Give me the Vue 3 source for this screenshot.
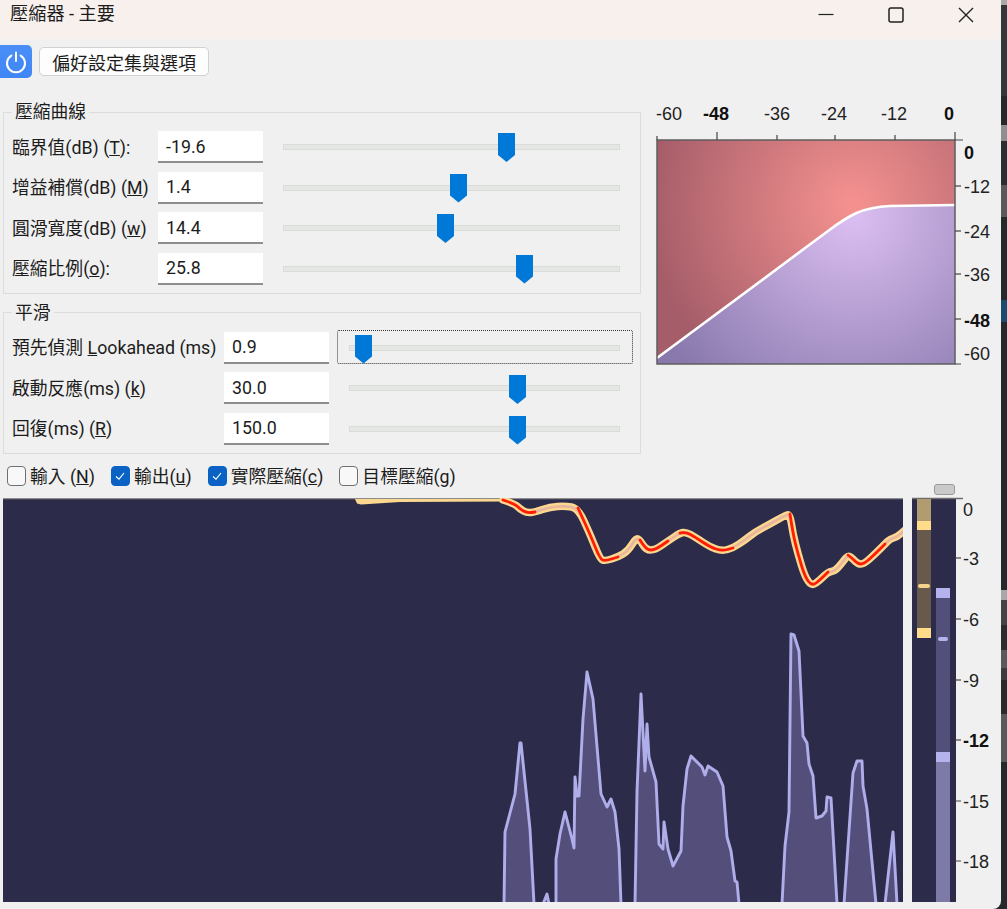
<script setup>
const curveRows = [
  { label: ['臨界值(dB) (', 'T', '):'], value: '-19.6', thumb: 215 },
  { label: ['增益補償(dB) (', 'M', ')'], value: '1.4', thumb: 167 },
  { label: ['圓滑寬度(dB) (', 'w', ')'], value: '14.4', thumb: 154 },
  { label: ['壓縮比例(', 'o', '):'], value: '25.8', thumb: 233 }
]
const smoothRows = [
  { label: ['預先偵測 ', 'L', 'ookahead (ms)'], value: '0.9', thumb: 6, focused: true },
  { label: ['啟動反應(ms) (', 'k', ')'], value: '30.0', thumb: 160 },
  { label: ['回復(ms) (', 'R', ')'], value: '150.0', thumb: 160 }
]
const checks = [
  { label: ['輸入 (', 'N', ')'], on: false },
  { label: ['輸出(', 'u', ')'], on: true },
  { label: ['實際壓縮(', 'c', ')'], on: true },
  { label: ['目標壓縮(', 'g', ')'], on: false }
]
const topScale = [
  { t: '-60', x: 669 }, { t: '-48', x: 716, b: true }, { t: '-36', x: 777 },
  { t: '-24', x: 834 }, { t: '-12', x: 894 }, { t: '0', x: 949, b: true }
]
const topTicks = [[657, 136], [717, 132], [777, 135], [835, 135], [895, 135], [955, 132]]
const rightScale = [
  { t: '0', y: 152, b: true }, { t: '-12', y: 186 }, { t: '-24', y: 231 },
  { t: '-36', y: 274 }, { t: '-48', y: 320, b: true }, { t: '-60', y: 353 }
]
const rightTicks = [186, 231, 274, 319]
const meterScale = [
  { t: '0', y: 510, tick: 499 }, { t: '-3', y: 559, tick: 559 }, { t: '-6', y: 620, tick: 620 },
  { t: '-9', y: 681, tick: 681 }, { t: '-12', y: 741, tick: 741, b: true },
  { t: '-15', y: 802, tick: 802 }, { t: '-18', y: 862, tick: 862 }
]
const blobs = [
  '504,905 505,833 515,795 520,744 521,744 530,830 534,905',
  '543,905 547,895 549,905',
  '556,905 556,860 560,835 565,813 572,840 574,849 575,778 577,797 579,797 583,720 587,673 593,700 601,795 607,808 611,800 615,813 619,850 621,905',
  '635,905 637,793 641,695 645,772 647,725 649,758 656,783 659,845 663,850 664,823 668,850 673,867 681,852 683,807 687,770 691,757 697,763 702,768 705,776 708,767 717,773 723,787 727,838 731,852 735,882 737,883 739,905',
  '782,905 785,847 789,813 791,635 794,636 799,652 803,737 807,744 809,765 813,777 816,819 822,817 826,812 827,798 831,799 837,905',
  '844,905 853,774 857,762 862,762 863,787 867,810 876,905',
  '885,905 893,833 897,905'
]
const gainPts = [
  [503, 501], [515, 505], [520, 510], [527, 514], [535, 513], [550, 508], [565, 507], [578, 509],
  [590, 535], [600, 560], [605, 562], [618, 558], [628, 552], [636, 539], [640, 541], [646, 551],
  [655, 551], [668, 542], [680, 534], [686, 533], [695, 538], [710, 548], [722, 552], [733, 549],
  [745, 541], [755, 533], [770, 525], [784, 517], [790, 515], [793, 535], [798, 555], [805, 578],
  [812, 587], [820, 581], [828, 573], [835, 572], [842, 564], [848, 556], [853, 560], [858, 565],
  [864, 565], [875, 555], [885, 545], [890, 540], [897, 538], [905, 531]
]
function smooth(pts) {
  let d = `M${pts[0][0]} ${pts[0][1]}`
  for (let i = 1; i < pts.length - 1; i++) {
    const mx = (pts[i][0] + pts[i + 1][0]) / 2
    const my = (pts[i][1] + pts[i + 1][1]) / 2
    d += ` Q${pts[i][0]} ${pts[i][1]} ${mx} ${my}`
  }
  const last = pts[pts.length - 1]
  return d + ` L${last[0]} ${last[1]}`
}
const gainPath = smooth(gainPts)
const gainRed = [[0, 4], [7, 11], [14, 17], [18, 23], [28, 34], [37, 42]].map(([a, b]) => smooth(gainPts.slice(a, b + 1)))
const stripes = [
  [5, '#a9a9a9'], [91, '#33373a'], [29, '#26292b'], [16, '#8f8f8f'], [44, '#2a2e30'], [32, '#595959'],
  [83, '#26292b'], [22, '#1e4a6b'], [268, '#26292b'], [10, '#a8a8a8'], [25, '#444444'], [25, '#2c2c2c'],
  [18, '#5a5a5a'], [12, '#3c3c3c'], [34, '#2a2a2a'], [48, '#5a5a5a'], [147, '#26292b']
]
</script>

<template>
  <div class="page">
    <div class="window">
      <header class="titlebar">
        <span class="title">壓縮器 - 主要</span>
        <div class="controls">
          <span class="ctl"><svg width="16" height="16" viewBox="0 0 16 16"><path d="M0.5 7.5H15.5" stroke="#222" stroke-width="1.2" /></svg></span>
          <span class="ctl"><svg width="16" height="16" viewBox="0 0 16 16"><rect x="1" y="1" width="14" height="14" rx="2" fill="none" stroke="#222" stroke-width="1.5" /></svg></span>
          <span class="ctl"><svg width="16" height="16" viewBox="0 0 16 16"><path d="M1 1L15 15M15 1L1 15" stroke="#222" stroke-width="1.4" /></svg></span>
        </div>
      </header>

      <div class="toolbar">
        <button class="power" type="button" aria-label="power">
          <svg width="24" height="24" viewBox="0 0 24 24">
            <path d="M7.4 5.6A9 9 0 1 0 16.6 5.6" fill="none" stroke="#fff" stroke-width="2" stroke-linecap="round" />
            <path d="M12 2.5V11" stroke="#fff" stroke-width="2" stroke-linecap="round" />
          </svg>
        </button>
        <button class="preset" type="button">偏好設定集與選項</button>
      </div>

      <div class="top">
        <div class="panel">
          <fieldset class="group">
            <legend>壓縮曲線</legend>
            <div v-for="r in curveRows" :key="r.value" class="row">
              <label class="lbl lbl-a">{{ r.label[0] }}<u>{{ r.label[1] }}</u>{{ r.label[2] }}</label>
              <input class="num" :value="r.value" readonly />
              <div class="slider slider-a">
                <span class="track"></span>
                <span class="thumb" :style="{ left: r.thumb + 'px' }"></span>
              </div>
            </div>
          </fieldset>
          <fieldset class="group second">
            <legend>平滑</legend>
            <div v-for="r in smoothRows" :key="r.value" class="row">
              <label class="lbl lbl-b">{{ r.label[0] }}<u>{{ r.label[1] }}</u>{{ r.label[2] }}</label>
              <input class="num" :value="r.value" readonly />
              <div class="slider slider-b" :class="{ focused: r.focused }">
                <span class="track"></span>
                <span class="thumb" :style="{ left: r.thumb + 'px' }"></span>
              </div>
            </div>
          </fieldset>
        </div>

        <svg class="curve" width="351" height="270" viewBox="650 100 351 270">
          <defs>
            <radialGradient id="up" gradientUnits="userSpaceOnUse" cx="853" cy="205" r="205">
              <stop offset="0" stop-color="#f69290" />
              <stop offset="1" stop-color="#a55d69" />
            </radialGradient>
            <radialGradient id="low" gradientUnits="userSpaceOnUse" cx="853" cy="215" r="225">
              <stop offset="0" stop-color="#dcbff2" />
              <stop offset="1" stop-color="#8878ac" />
            </radialGradient>
          </defs>
          <rect x="657" y="140" width="298" height="224" fill="url(#up)" />
          <path d="M657 358L828 231C848 216 862 207 890 206L955 205V364H657Z" fill="url(#low)" />
          <path d="M657 358L828 231C848 216 862 207 890 206L955 205" fill="none" stroke="#fff" stroke-width="2.6" />
          <rect x="657" y="140" width="298" height="224" fill="none" stroke="#5e5e5e" stroke-width="1.5" />
          <path v-for="t in topTicks" :key="t[0]" :d="`M${t[0]} 140V${t[1]}`" stroke="#444" stroke-width="1.2" />
          <path d="M955 140H963M955 364H961" stroke="#444" stroke-width="1.2" />
          <path v-for="y in rightTicks" :key="y" :d="`M955 ${y}H961`" stroke="#444" stroke-width="1.2" />
          <text v-for="s in topScale" :key="s.t" class="scale" :class="{ bold: s.b }" :x="s.x" y="120" text-anchor="middle">{{ s.t }}</text>
          <text v-for="s in rightScale" :key="s.t" class="scale" :class="{ bold: s.b }" x="964" :y="s.y + 6.5">{{ s.t }}</text>
        </svg>
      </div>

      <div class="checks">
        <label v-for="c in checks" :key="c.label[0]" class="check">
          <span class="box" :class="{ on: c.on }">
            <svg v-if="c.on" width="12" height="12" viewBox="0 0 12 12"><path d="M2 6.5L5 9.2L10 3" fill="none" stroke="#fff" stroke-width="1.1" /></svg>
          </span>
          <span class="check-text">{{ c.label[0] }}<u>{{ c.label[1] }}</u>{{ c.label[2] }}</span>
        </label>
      </div>

      <div class="scope">
        <svg class="wave" width="900" height="404" viewBox="3 499 900 404">
          <defs>
            <filter id="soft" x="-5%" y="-5%" width="110%" height="110%">
              <feGaussianBlur stdDeviation="0.45" />
            </filter>
          </defs>
          <rect x="3" y="499" width="900" height="404" fill="#2c2c4a" />
          <path d="M3 499.5H903" stroke="#8c8c8c" stroke-width="1.5" />
          <g filter="url(#soft)">
            <polygon v-for="(b, i) in blobs" :key="i" :points="b" fill="#52507a" stroke="#b0aeea" stroke-width="2.9" stroke-linejoin="round" />
            <polygon points="355,500 503,500 505,502.5 400,503 361,505.5 357,504.5" fill="#fbd78f" />
            <path :d="gainPath" fill="none" stroke="#fbd78f" stroke-width="7.5" stroke-linejoin="round" stroke-linecap="round" />
            <path :d="gainPath" fill="none" stroke="#e8b69e" stroke-width="2.6" stroke-linejoin="round" />
            <path v-for="(p, i) in gainRed" :key="'r' + i" :d="p" fill="none" stroke="#ff1e06" stroke-width="2.8" stroke-linejoin="round" stroke-linecap="round" />
          </g>
        </svg>
        <div class="meter">
          <span class="handle"></span>
          <svg width="89" height="404" viewBox="912 499 89 404">
            <rect x="912" y="499" width="44" height="404" fill="#2c2c4a" />
            <path d="M912 499.5H963" stroke="#6e6e6e" stroke-width="1.5" />
            <rect x="917" y="500" width="14" height="22" fill="#b09c70" />
            <rect x="917" y="522" width="14" height="9" fill="#ffdc8a" />
            <rect x="917" y="531" width="14" height="98" fill="#675a4c" />
            <rect x="918" y="585" width="12" height="4" rx="2" fill="#f4d48a" />
            <rect x="917" y="629" width="14" height="10" fill="#ffdc8a" />
            <rect x="936" y="589" width="14" height="10" fill="#b5b3ee" />
            <rect x="936" y="599" width="14" height="154" fill="#52507a" />
            <rect x="938" y="638" width="10" height="4" rx="2" fill="#b5b3ee" />
            <rect x="936" y="753" width="14" height="10" fill="#b5b3ee" />
            <rect x="936" y="763" width="14" height="140" fill="#7d7aa8" />
            <path v-for="s in meterScale.slice(1)" :key="s.t" :d="`M955 ${s.tick}H961`" stroke="#444" stroke-width="1.2" />
            <text v-for="s in meterScale" :key="s.t" class="scale" :class="{ bold: s.b }" x="963" :y="s.y + 6.5">{{ s.t }}</text>
          </svg>
        </div>
      </div>
    </div>
    <div class="strip">
      <span v-for="(s, i) in stripes" :key="i" :style="{ height: s[0] + 'px', background: s[1] }"></span>
    </div>
  </div>
</template>

<style scoped>
.page {
  width: 1007px;
  height: 909px;
  display: flex;
  overflow: hidden;
  background: #26292b;
  font-family: Roboto, "Noto Sans CJK TC", sans-serif;
  font-size: 17.8px;
  color: #1c1c1c;
}
.window {
  width: 1001px;
  height: 909px;
  flex: none;
  display: flex;
  flex-direction: column;
  background: #f0f0f0;
  border-bottom-right-radius: 8px;
  overflow: hidden;
}
.strip {
  width: 6px;
  display: flex;
  flex-direction: column;
}
.strip span {
  display: block;
  flex: none;
}
.titlebar {
  height: 39px;
  flex: none;
  display: flex;
  justify-content: space-between;
  background: #f7f0ec;
}
.title {
  margin-left: 10px;
  line-height: 28px;
  font-size: 18.2px;
}
.controls {
  display: flex;
}
.ctl {
  width: 70px;
  height: 29px;
  display: flex;
  align-items: center;
  justify-content: center;
}
.toolbar {
  display: flex;
  align-items: center;
  gap: 7px;
  margin-top: 6px;
  height: 33px;
}
button {
  font: inherit;
  color: inherit;
  padding: 0;
}
.power {
  width: 32px;
  height: 33px;
  display: flex;
  align-items: center;
  justify-content: center;
  border: none;
  border-radius: 0 5px 5px 0;
  background: linear-gradient(#4a8ff8, #3f86f5);
}
.preset {
  width: 170px;
  height: 29px;
  background: #fdfdfd;
  border: 1px solid #d2d2d2;
  border-radius: 5px;
  font-size: 18px;
}
.top {
  display: flex;
  gap: 9px;
  margin-top: 22px;
  padding-left: 3px;
}
.panel {
  width: 638px;
  flex: none;
  display: flex;
  flex-direction: column;
  gap: 7px;
}
.group {
  margin: 0;
  padding: 7px 0 8px 8px;
  min-width: 0;
  border: 1px solid #dcdcdc;
  display: flex;
  flex-direction: column;
  gap: 8.5px;
}
.group legend {
  margin-left: 0;
  padding: 0 3px;
  line-height: 24px;
}
.row {
  display: flex;
  align-items: center;
  height: 32px;
}
.lbl {
  flex: none;
  white-space: nowrap;
  padding-bottom: 3px;
}
.lbl-a {
  width: 146px;
}
.lbl-b {
  width: 212px;
}
.num {
  width: 105px;
  height: 32px;
  flex: none;
  box-sizing: border-box;
  padding: 0 8px;
  border: none;
  border-bottom: 2px solid #8e8e8e;
  background: #fff;
  font: inherit;
  color: inherit;
  outline: none;
}
.slider {
  position: relative;
  height: 32px;
  flex: none;
  display: flex;
  align-items: center;
}
.slider-a {
  margin-left: 20px;
  width: 337px;
}
.slider-b {
  margin-left: 20px;
  width: 271px;
}
.focused::after {
  content: "";
  position: absolute;
  left: -12px;
  right: -13px;
  top: -2px;
  bottom: 0;
  border: 1px dotted #333;
  border-radius: 2px;
}
.track {
  display: block;
  width: 100%;
  height: 6px;
  box-sizing: border-box;
  background: #e4e7e4;
  border: 1px solid #dadcda;
}
.thumb {
  position: absolute;
  top: 2px;
  width: 17px;
  height: 29px;
  background: #0078d7;
  clip-path: polygon(0 0, 100% 0, 100% 76%, 50% 100%, 0 76%);
}
.slider-b .thumb {
  top: 3px;
}
.curve {
  flex: none;
  display: block;
}
.scale {
  font-family: "Liberation Sans", Arial, sans-serif;
  font-size: 18px;
  fill: #222;
}
.scale.bold {
  font-weight: 700;
  fill: #111;
}
.checks {
  display: flex;
  gap: 16px;
  height: 20px;
  margin-top: 12px;
  padding-left: 7px;
}
.check {
  display: flex;
  align-items: center;
  gap: 4px;
  white-space: nowrap;
}
.check-text {
  padding-bottom: 2px;
}
.box {
  width: 19px;
  height: 20px;
  box-sizing: border-box;
  border: 1px solid #6f6f6f;
  border-radius: 4px;
  background: #f8f8f8;
  display: flex;
  align-items: center;
  justify-content: center;
}
.box.on {
  background: #0a63c4;
  border-color: #0a63c4;
}
.scope {
  display: flex;
  gap: 9px;
  margin-top: 12px;
  padding-left: 3px;
}
.wave {
  display: block;
  flex: none;
}
.meter {
  position: relative;
  width: 89px;
  height: 404px;
  flex: none;
}
.meter svg {
  display: block;
  overflow: visible;
}
.handle {
  position: absolute;
  left: 22px;
  top: -14px;
  width: 19px;
  height: 9px;
  background: #cacaca;
  border: 1px solid #9a9a9a;
  border-radius: 3px;
}
</style>
